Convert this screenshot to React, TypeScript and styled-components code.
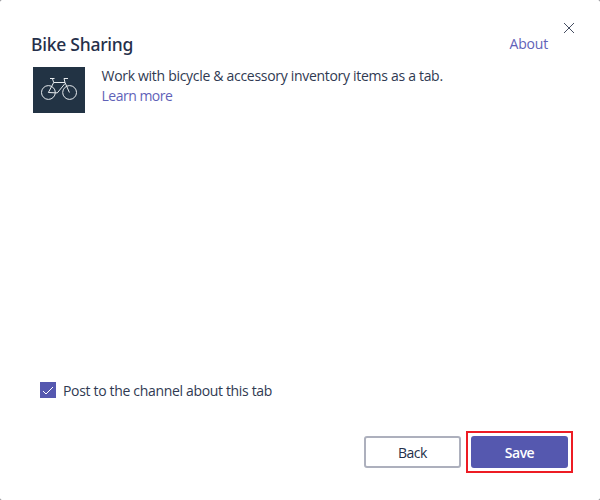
import React, { useState } from "react";
import styled, { createGlobalStyle } from "styled-components";

const GlobalStyle = createGlobalStyle`
  * { box-sizing: border-box; }
  html, body { margin: 0; padding: 0; background: #77787d; }
  body { font-family: "Open Sans", "Noto Sans", sans-serif; font-size: 14px; color: #303a52; overflow: hidden; }
`;

const Dialog = styled.main`
  position: relative;
  display: flex;
  flex-direction: column;
  width: 600px;
  height: 500px;
  padding: 32px 27px 27px 32px;
  background: #fff;
  border-radius: 2px;
`;

const CloseButton = styled.button`
  position: absolute;
  top: 20px;
  right: 23px;
  display: flex;
  width: 16px;
  height: 16px;
  padding: 0;
  border: 0;
  background: none;
`;

const Header = styled.header`
  display: flex;
  justify-content: space-between;
  height: 34px;
  margin-left: -1px;
  padding-right: 25px;
`;

const Title = styled.h1`
  margin: 0;
  color: #252f4a;
  font-family: "Noto Sans", sans-serif;
  font-size: 17.5px;
  font-weight: 500;
  line-height: 24px;
  letter-spacing: -0.25px;
`;

const Link = styled.a`
  color: #5f62b8;
  text-decoration: none;
  line-height: 20px;
  white-space: nowrap;
  letter-spacing: -0.5px;
`;

const HeaderLink = styled(Link)`
  line-height: 24px;
  letter-spacing: -0.2px;
`;

const AppInfo = styled.section`
  display: flex;
  gap: 16.5px;
  flex: 1;
  padding-left: 1px;
`;

const AppIcon = styled.div`
  width: 52px;
  height: 46px;
  margin-top: 1px;
  background: #223344;
  svg { display: block; }
`;

const Description = styled.div`
  display: flex;
  flex-direction: column;
  align-items: flex-start;
`;

const Text = styled.p<{ $spacing?: string }>`
  margin: 0;
  line-height: 20px;
  white-space: nowrap;
  letter-spacing: ${(p) => p.$spacing ?? "0"};
`;

const PostOption = styled.label`
  display: flex;
  align-items: center;
  gap: 7px;
  height: 20px;
  margin: 0 0 30px 8px;
`;

const CheckInput = styled.input`
  position: absolute;
  opacity: 0;
`;

const CheckBox = styled.span`
  display: flex;
  width: 16px;
  height: 16px;
  margin-bottom: 2px;
  background: #5558af;
`;

const Actions = styled.footer`
  display: flex;
  justify-content: flex-end;
  align-items: center;
  gap: 5px;
`;

const Button = styled.button<{ $primary?: boolean }>`
  width: 97px;
  height: 32px;
  padding: 0;
  border: 2px solid ${(p) => (p.$primary ? "#5558af" : "#adb0bd")};
  border-radius: 3px;
  background: ${(p) => (p.$primary ? "#5558af" : "#fff")};
  color: ${(p) => (p.$primary ? "#fff" : "#252f4a")};
  font: inherit;
  font-weight: ${(p) => (p.$primary ? 600 : 400)};
  letter-spacing: -0.5px;
`;

const Highlight = styled.div`
  padding: 3px;
  border: 2px solid #ed1c24;
  display: flex;
`;

export default function App() {
  const [checked, setChecked] = useState(true);
  return (
    <>
      <GlobalStyle />
      <Dialog>
        <CloseButton aria-label="Close">
          <svg width="16" height="16" viewBox="0 0 16 16" stroke="#454e62" strokeWidth="1" fill="none">
            <path d="M3 3l10 10M13 3L3 13" />
          </svg>
        </CloseButton>
        <Header>
          <Title>Bike Sharing</Title>
          <HeaderLink>About</HeaderLink>
        </Header>
        <AppInfo>
          <AppIcon>
            <svg width="52" height="46" viewBox="0 0 52 46" fill="none" stroke="#e8ecef" strokeWidth="1">
              <circle cx="15.4" cy="25.5" r="6.9" />
              <circle cx="36.6" cy="25.5" r="6.9" />
              <path d="M17 11.5h4.5M19.4 11.5l1.3 4l-5.3 10l8.9 .4M20.7 15.5h11.3M32 16.5l-7.7 9.4M35 11.5h-4l1 4l4.4 10" />
            </svg>
          </AppIcon>
          <Description>
            <Text $spacing="-0.3px">Work with bicycle &amp; accessory inventory items as a tab.</Text>
            <Link>Learn more</Link>
          </Description>
        </AppInfo>
        <PostOption>
          <CheckInput type="checkbox" checked={checked} onChange={() => setChecked(!checked)} />
          <CheckBox>
            {checked && (
              <svg width="16" height="16" viewBox="0 0 16 16" fill="none" stroke="#fff" strokeWidth="1">
                <path d="M3 9l3 3 7-7" />
              </svg>
            )}
          </CheckBox>
          <Text $spacing="-0.33px">Post to the channel about this tab</Text>
        </PostOption>
        <Actions>
          <Button>Back</Button>
          <Highlight>
            <Button $primary>Save</Button>
          </Highlight>
        </Actions>
      </Dialog>
    </>
  );
}
